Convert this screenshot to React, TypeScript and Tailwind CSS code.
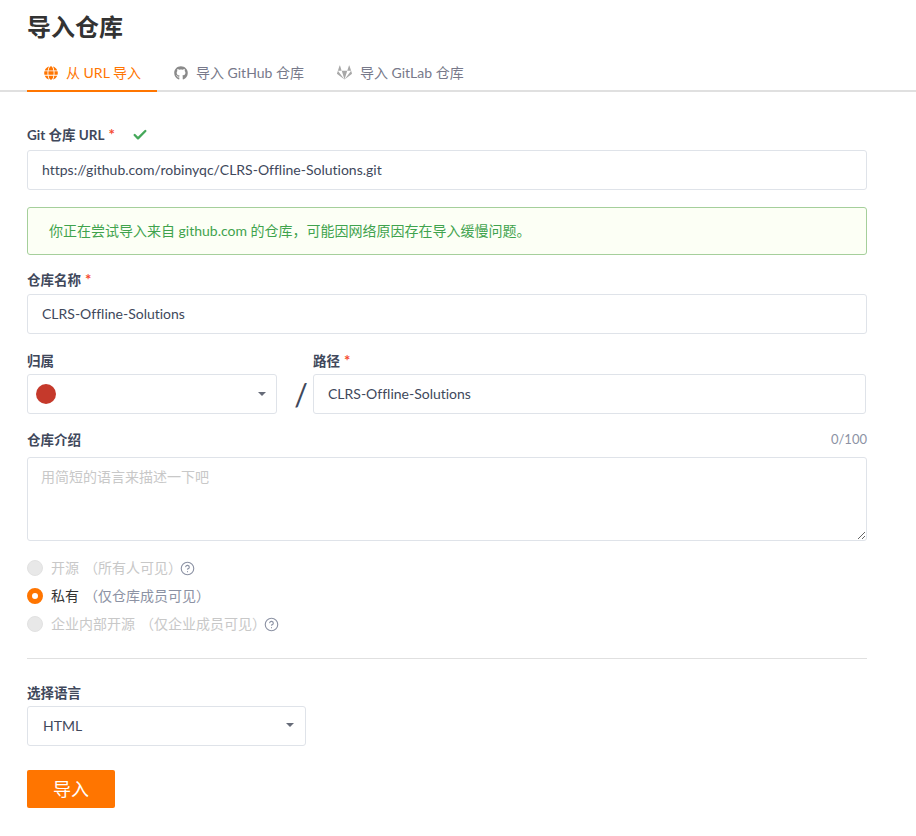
import { Check, HelpCircle } from "lucide-react";
import { FaGithub, FaGitlab, FaGlobe } from "react-icons/fa";

const font = { fontFamily: 'Lato, "Noto Sans CJK SC", sans-serif' };

function Label({ text, required }: { text: string; required?: boolean }) {
  return (
    <span className="text-[13.5px] leading-[18px] font-bold text-[#40485b]">
      {text}
      {required && <span className="text-[#f5492f] text-[15px] leading-none ml-1">*</span>}
    </span>
  );
}

function Caret() {
  return <span className="w-0 h-0 border-x-[4px] border-x-transparent border-t-[4px] border-t-[#666b78]" />;
}

function TextInput({ value }: { value: string }) {
  return (
    <div className="h-10 flex items-center px-[14px] pb-[2px] border border-[#dfe3e9] rounded-[3px] text-[14px] text-[#40485b] bg-white [font-variant-ligatures:none]">
      {value}
    </div>
  );
}

function Radio({ label, note, state, help }: { label: string; note: string; state: "off" | "on"; help?: boolean }) {
  const on = state === "on";
  return (
    <div className="h-7 flex items-center text-[14px]">
      {on ? (
        <span className="w-4 h-4 rounded-full border-[5px] border-[#ff7500] bg-white" />
      ) : (
        <span className="w-4 h-4 rounded-full bg-[#e8e8e8] border border-[#e2e2e2]" />
      )}
      <span className={`ml-2 mb-[2px] ${on ? "text-[#333333]" : "text-[#c8c8c8]"}`}>{label}</span>
      <span className={`ml-[5px] mb-[2px] ${on ? "text-[#8c92a4]" : "text-[#c8c8c8]"}`}>（{note}）</span>
      {help && <HelpCircle className="w-[15px] h-[15px] text-[#8c92a4] -ml-[2px]" strokeWidth={1.8} />}
    </div>
  );
}

export default function App() {
  return (
    <div className="w-[916px] h-[836px] bg-white overflow-hidden" style={font}>
      <h1 className="pl-[27px] pt-[11px] text-[24px] leading-8 font-bold text-[#333333]">导入仓库</h1>

      <div className="mt-[12px] pl-[27px] flex h-[37px] border-b-2 border-[#e0e0e0] text-[14px]">
        <div className="w-[130px] h-[37px] pl-[1px] flex items-center justify-center gap-2 text-[#ff7500] border-b-2 border-[#ff7500]">
          <FaGlobe className="w-[14px] h-[14px]" />
          <span>从 URL 导入</span>
        </div>
        <div className="ml-[17px] h-[35px] flex items-center gap-2 text-[#77798a]">
          <FaGithub className="w-[14px] h-[14px] text-[#8a8a8a]" />
          <span>导入 GitHub 仓库</span>
        </div>
        <div className="ml-[33px] h-[35px] flex items-center gap-2 text-[#77798a]">
          <FaGitlab className="w-[15px] h-[15px] text-[#a8a8a8]" />
          <span>导入 GitLab 仓库</span>
        </div>
      </div>

      <div className="ml-[27px] w-[840px] mt-[34px]">
        <div className="h-[18px] flex items-center gap-[17px] mb-[6px]">
          <Label text="Git 仓库 URL" required />
          <Check className="w-[16px] h-[16px] text-[#45a85a]" strokeWidth={3.5} />
        </div>
        <TextInput value="https://github.com/robinyqc/CLRS-Offline-Solutions.git" />

        <div className="mt-[17px] h-[48px] flex items-center pl-[21px] pb-[2px] border border-[#a5cf9b] rounded-[3px] bg-[#fcfff5] text-[14px] text-[#3fa34d]">
          你正在尝试导入来自 github.com 的仓库，可能因网络原因存在导入缓慢问题。
        </div>

        <div className="mt-[16px] mb-[5px] h-[18px] flex items-center">
          <Label text="仓库名称" required />
        </div>
        <TextInput value="CLRS-Offline-Solutions" />

        <div className="mt-[18px] flex">
          <div className="w-[250px]">
            <div className="h-[18px] mb-[4px] flex items-center">
              <Label text="归属" />
            </div>
            <div className="h-10 flex items-center justify-between pl-[8px] pr-[10px] border border-[#dfe3e9] rounded-[3px]">
              <span className="w-5 h-5 rounded-full bg-[#c5392b]" />
              <Caret />
            </div>
          </div>
          <div className="w-[36px] pt-[22px] pl-[12px] h-[62px] flex items-center justify-center text-[30px] font-normal text-[#40485b] leading-none">
            /
          </div>
          <div className="w-[553px]">
            <div className="h-[18px] mb-[4px] flex items-center">
              <Label text="路径" required />
            </div>
            <TextInput value="CLRS-Offline-Solutions" />
          </div>
        </div>

        <div className="mt-[17px] mb-[8px] h-[18px] flex items-center justify-between">
          <Label text="仓库介绍" />
          <span className="text-[13px] text-[#8c92a4]">0/100</span>
        </div>
        <textarea
          readOnly
          placeholder="用简短的语言来描述一下吧"
          className="block w-full h-[84px] px-[13px] py-[10px] border border-[#dfe3e9] rounded-[3px] text-[14px] leading-[18px] placeholder:text-[#c8c8c8] outline-none"
        />

        <div className="mt-[13px]">
          <Radio label="开源" note="所有人可见" state="off" help />
          <Radio label="私有" note="仅仓库成员可见" state="on" />
          <Radio label="企业内部开源" note="仅企业成员可见" state="off" help />
        </div>

        <div className="mt-[20px] border-t border-[#e0e0e0]" />

        <div className="mt-[25px] mb-[4px] h-[18px] flex items-center">
          <Label text="选择语言" />
        </div>
        <div className="w-[279px] h-10 flex items-center justify-between pl-[15px] pr-[11px] pb-[2px] border border-[#dfe3e9] rounded-[3px] text-[14px] text-[#40485b]">
          HTML
          <Caret />
        </div>

        <button className="mt-[24px] block w-[88px] h-[38px] bg-[#ff7500] rounded-[2px] text-white text-[18px]">导入</button>
      </div>
    </div>
  );
}
